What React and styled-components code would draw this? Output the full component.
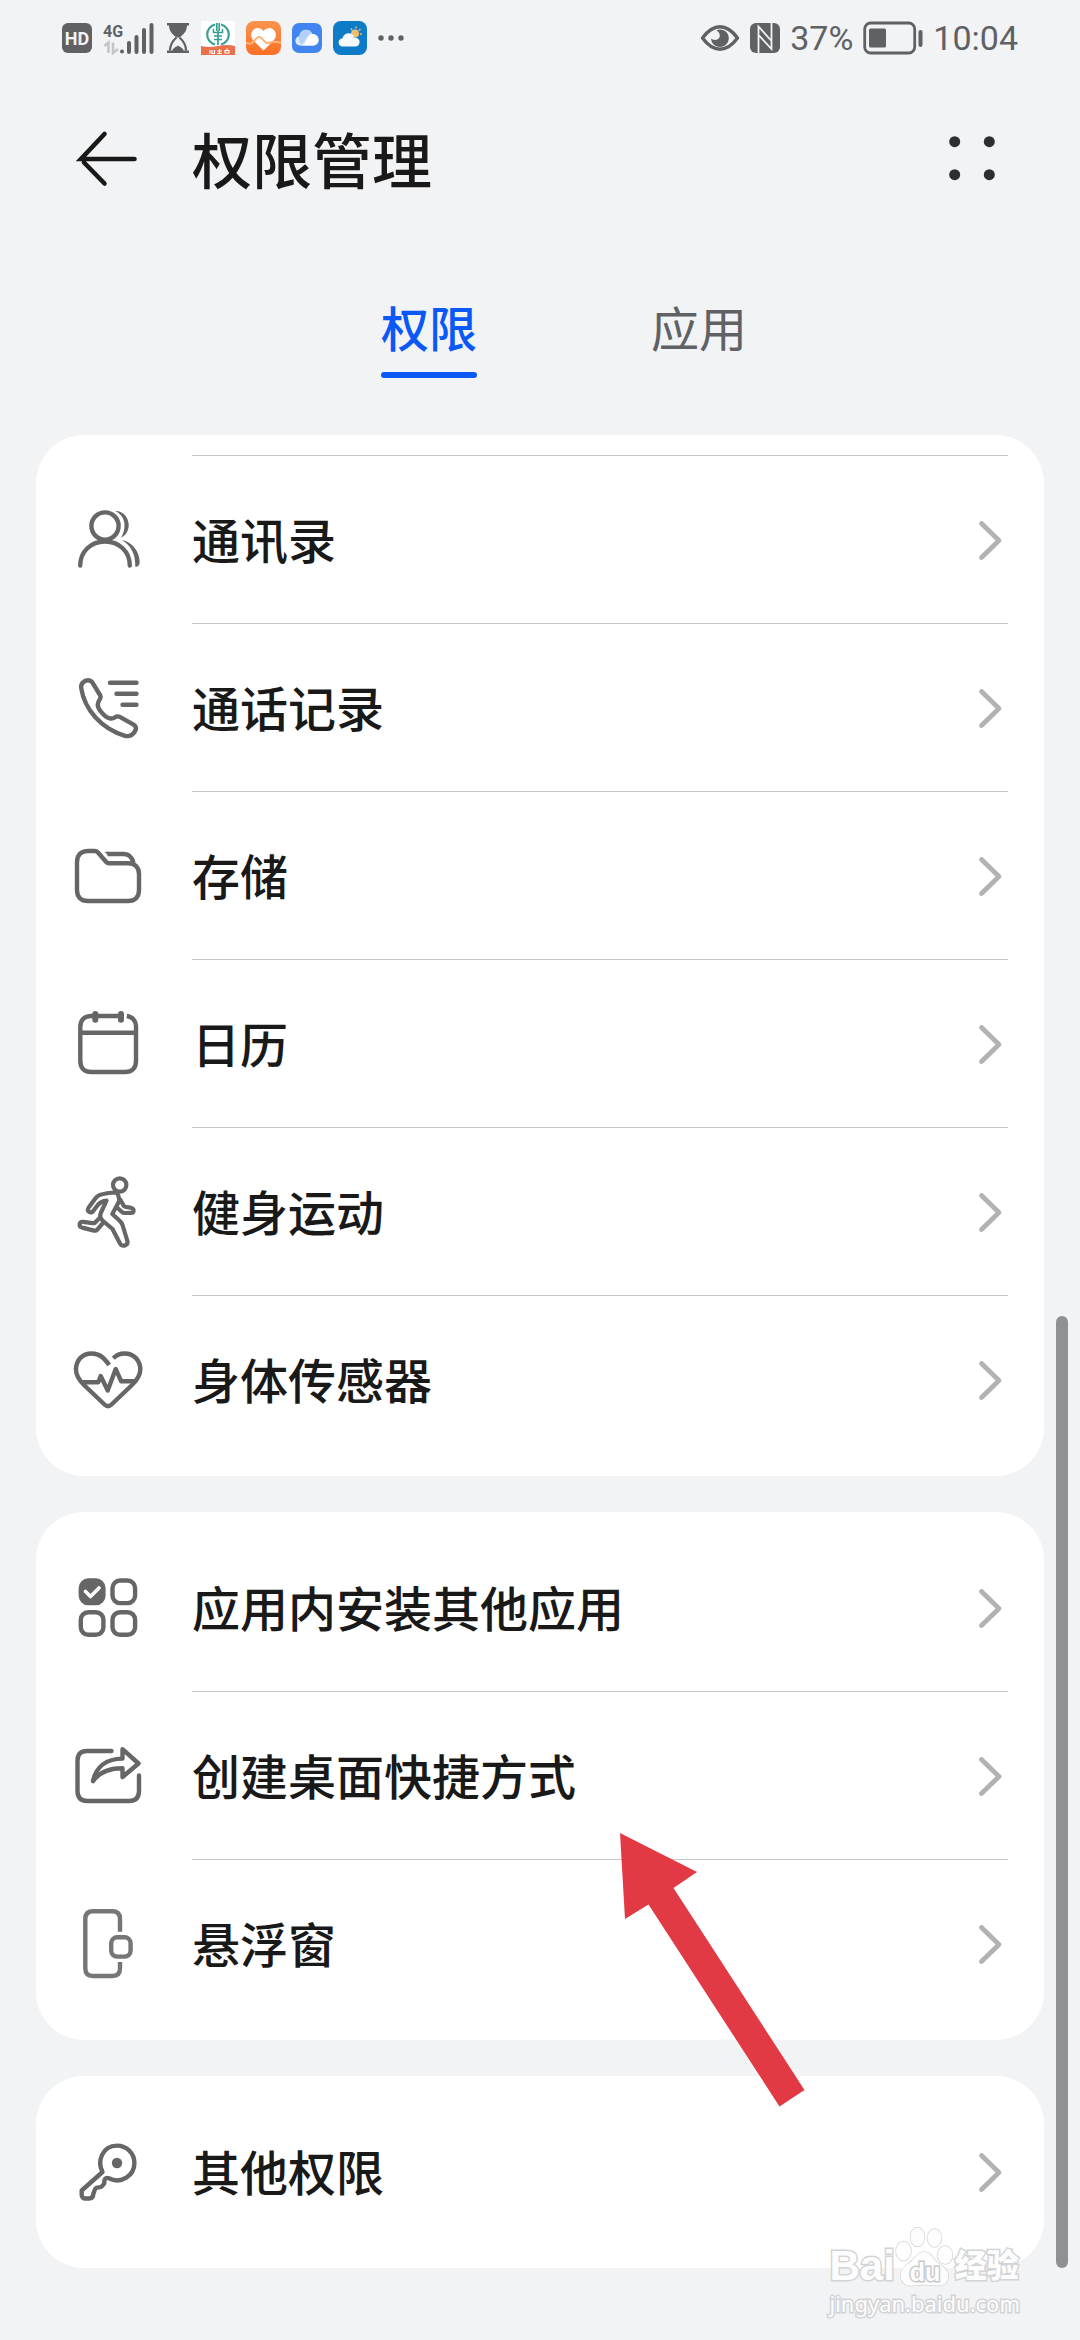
import React from "react";
import styled, { createGlobalStyle } from "styled-components";

const GlobalStyle = createGlobalStyle`
  * {
    box-sizing: border-box;
  }
  body {
    margin: 0;
    background-color: #f1f3f5;
    color: #191919;
    font-family: "Noto Sans CJK SC", sans-serif;
  }
  button {
    margin: 0;
    padding: 0;
    border: none;
    background: none;
    color: inherit;
    font: inherit;
    cursor: pointer;
  }
  svg {
    display: block;
    flex-shrink: 0;
  }
`;

const Page = styled.div`
  position: relative;
  min-height: 100vh;
  padding-bottom: 72px;
`;

const StatusBar = styled.div`
  display: flex;
  justify-content: space-between;
  align-items: center;
  height: 76px;
  padding: 0 62px;
  color: #606164;
`;

const StatusGroup = styled.div`
  display: flex;
  align-items: center;
  gap: ${(props) => props.$gap}px;
`;

const StatusText = styled.span`
  font-family: Roboto, sans-serif;
  font-size: 34px;
  line-height: 40px;
`;

const Header = styled.header`
  display: flex;
  align-items: center;
  height: 168px;
  padding: 0 72px;
`;

const IconButton = styled.button`
  width: 72px;
  height: 72px;
`;

const Title = styled.h1`
  flex: 1;
  margin: 0 0 0 48px;
  padding-bottom: 4px;
  font-size: 60px;
  font-weight: 500;
  line-height: 84px;
`;

const Tabs = styled.div`
  display: flex;
  justify-content: center;
  gap: 174px;
  padding: 44px 0 57px 48px;
`;

const Tab = styled.button`
  position: relative;
  height: 90px;
  padding-bottom: 14px;
  color: #606164;
  font-size: 48px;
  line-height: 72px;

  &[aria-selected="true"] {
    color: #0a59f7;
    font-weight: 500;
  }

  &[aria-selected="true"]::after {
    content: "";
    position: absolute;
    left: 0;
    right: 0;
    bottom: 0;
    height: 6px;
    border-radius: 3px;
    background-color: #0a59f7;
  }
`;

const Cards = styled.main`
  display: flex;
  flex-direction: column;
  gap: 36px;
  padding: 0 36px;
`;

const Card = styled.ul`
  position: relative;
  list-style: none;
  margin: 0;
  padding: ${(props) => (props.$scrolled ? 0 : 12)}px 0 12px;
  border-radius: 48px;
  background-color: #fff;
`;

const RowStub = styled.li`
  height: 21px;
  margin: 0 36px 0 156px;
  border-bottom: 1px solid #c7c7c7;
`;

const Row = styled.button`
  display: flex;
  align-items: center;
  gap: 48px;
  width: 100%;
  height: 168px;
  padding: 0 36px;
  text-align: left;
`;

const RowBody = styled.span`
  display: flex;
  flex: 1;
  align-items: center;
  justify-content: space-between;
  height: 168px;
  border-bottom: 1px solid #c7c7c7;

  li:last-of-type & {
    border-bottom-color: transparent;
  }
`;

const Label = styled.span`
  padding-bottom: 4px;
  font-size: 48px;
  font-weight: 500;
  line-height: 72px;
`;

const ScrollThumb = styled.div`
  position: absolute;
  right: 12px;
  top: 1316px;
  bottom: 72px;
  width: 12px;
  border-radius: 6px;
  background-color: #909193;
`;

const Pointer = styled.svg`
  position: absolute;
  z-index: 1;
  left: 584px;
  top: 321px;
  pointer-events: none;
`;

const Watermark = styled.div`
  position: absolute;
  right: 60px;
  bottom: 22px;
  color: #fdfdfd;
  -webkit-text-stroke: 3px #d3d4d6;
  paint-order: stroke fill;
  pointer-events: none;
`;

const WatermarkLogo = styled.div`
  display: flex;
  align-items: flex-end;
  height: 64px;
  font-family: "Liberation Sans", "Noto Sans CJK SC", sans-serif;
  font-size: 42px;
  font-weight: bold;
  line-height: 44px;
`;

const WatermarkName = styled.span`
  font-size: 32px;
  font-weight: 900;
`;

const WatermarkUrl = styled.div`
  font-family: "Noto Sans", sans-serif;
  font-size: 22px;
  line-height: 30px;
  text-align: right;
`;

const LineIcon = ({ children, color = "#666" }) => (
  <svg
    width="72"
    height="72"
    viewBox="0 0 72 72"
    fill="none"
    stroke={color}
    strokeWidth="4.4"
    strokeLinecap="round"
    strokeLinejoin="round"
    aria-hidden="true"
  >
    {children}
  </svg>
);

const ContactsIcon = () => (
  <LineIcon>
    <circle cx="33" cy="22" r="13.6" />
    <path d="M8.2 61.5C8.2 47.5 19 37.5 33 37.5S57.8 47.5 57.8 61.5" />
    <g fill="#666" stroke="none">
      <path d="M43 7c8-.5 13.7 6.5 13.7 14 0 6-3 10.500-7.500 12.500 2.500-4.500 3.300-8 3.300-12.500C52.500 15 49 9.500 43 7z" />
      <path d="M50 36c10 2 17.500 11 17.700 22 .1 4-3 5.500-4.400 4.500C63.500 50 59 41.500 50 36z" />
    </g>
  </LineIcon>
);

const CallLogIcon = () => (
  <LineIcon>
    <path d="M38 10.700H64.500M44.500 21.700H64.500M50.500 32.700H64.500" />
    <path d="M9.200 16C8.600 11.500 12 8.200 16 8.200c2.500 0 3.600 1 4.600 2.600l7.400 12.200c1 1.700.7 3-.3 4.500-2.700 3.600-2.500 7 0 10.500 2.600 3.600 5.800 7.500 10 8.400 2.200.4 3.800 0 5.500-1.200 1.800-1.200 3.200-1.100 5-.1l13 7.200c2.400 1.400 3.200 2.700 2.600 5.200-1.600 5-6.300 7.600-10.800 6.300C29 56.500 12.500 37.500 9.200 16z" />
  </LineIcon>
);

const FolderIcon = () => (
  <LineIcon>
    <path d="M16 11h7c1.500 0 2 .5 3 1.500l8 9.300c1 1.200 1.800 1.500 3 1.500h19c7 0 11 4 11 10.700v16c0 7-4 11-11 11H16C9 61 5 57 5 50V22c0-7 4-11 11-11z" />
    <path d="M35.500 14H52c5 0 8 3 9.500 9" strokeLinecap="butt" />
    <path d="M32.500 11.800l4.500 4.400V11.800z" fill="#666" stroke="none" />
  </LineIcon>
);

const CalendarIcon = () => (
  <LineIcon>
    <path
      d="M54.800 8c6 .8 9.200 5 9.200 11v34c0 7-4 11-11 11H19.300c-7 0-11-4-11-11V19c0-7 4-11 11-11H49M8.300 24.700H64"
      strokeLinecap="butt"
    />
    <path d="M23.300 6v5.700M49 6v5.700" strokeWidth="6" />
  </LineIcon>
);

const RunIcon = () => (
  <LineIcon>
    <g strokeWidth="4.200">
      <circle cx="47.700" cy="9" r="6.700" />
      <path d="M45 16.500c-6 .2-13 1-17.500 2.600-2 .8-3 1.800-4 3.200L16.700 31.500c-2.500 4 1.800 6.500 4.500 3.500l5-6.500c2.300-2.500 5-3.500 8.300-3.800L29 36.500c-1.600 3.500-.6 6 1.500 8l10 8.500 7.500 14.500c2.500 4 8.300 2 7.400-2.500L50.500 49c-.6-2-1.400-3-2.800-4.200L40.300 38 47 25.500c.8-3-.5-6-2-9z" />
      <path d="M28.200 41.500l-5.400 5.200c-.8.600-1.400.6-2.300.4l-9.200-1.300c-4.300-.4-5 4.700-1.200 5.800l12 3c1.500.3 2.300.1 3.200-1l6-7" />
      <path d="M48.500 24l3 5.500c.6.900 1.300 1.300 2.500 1.500l4.500.7c4.500 1 3.700 5.200.4 5.200l-6.400.1c-1 0-1.700-.3-2.500-1l-5-4.500" />
    </g>
  </LineIcon>
);

const HeartIcon = () => (
  <LineIcon>
    <path
      d="M37.200 21C32 14 28 9.500 19.800 9.500 10 9.500 4 16.500 4 25.500c0 6.500 3.500 11 8 15.500L32.500 60.500c2.500 2.400 4.500 2.400 7 0L60 41c4.800-4.800 8.300-9 8.300-15.500C68.300 16.500 62 9.500 52.500 9.500c-4.200 0-8 1.500-11.200 4.700"
      strokeLinecap="butt"
    />
    <path d="M11 38.200H26.300L28.700 32l7 14.500L43.700 25l5.500 12.300H63" />
  </LineIcon>
);

const InstallIcon = () => (
  <LineIcon>
    <rect x="8.800" y="8.500" width="22.600" height="22.600" rx="7.500" fill="#666" />
    <rect x="40.500" y="8.500" width="22.600" height="22.600" rx="7.500" />
    <rect x="8.800" y="40.200" width="22.600" height="22.600" rx="7.500" />
    <rect x="40.500" y="40.200" width="22.600" height="22.600" rx="7.500" />
    <path d="M13.500 19.500l5 5L27 16" stroke="#fff" strokeWidth="3.600" />
  </LineIcon>
);

const ShortcutIcon = () => (
  <LineIcon>
    <path d="M39.500 11H15c-6.500 0-9.500 3.500-9.500 10v30c0 6.500 3.500 10 10 10H57c6.500 0 10-3.500 10-10V35.500" />
    <path d="M50.500 9.200L66.500 23.500 50.500 37V28.200C37 28.200 27.500 31.500 21 41.200 24 26.500 34.500 18.800 50.500 18.600z" />
  </LineIcon>
);

const FloatingIcon = () => (
  <LineIcon color="#767676">
    <path
      d="M48 23.700V11c0-5-2.700-7.700-7.700-7.700H21c-5 0-7.700 2.700-7.700 7.700V60.300c0 5 2.700 7.700 7.700 7.700H40.300c5 0 7.700-2.700 7.700-7.700V54"
      strokeLinecap="butt"
    />
    <rect x="39.200" y="29.200" width="19.400" height="19.400" rx="6" />
  </LineIcon>
);

const KeyIcon = () => (
  <LineIcon>
    <path d="M30.500 36C25 25.500 30 9.600 45 9.600c10 0 17.400 8 17.400 17.400 0 12.500-13 21.500-25.500 15.300-1.700-.7-3-.4-3.900.6-1.500 1.600.3 3.600-1.200 5.200l-2 2.300c-1.500 1.700-3.500.4-5.300 1.300-2.700 1.300-1.600 3.800-3.200 5.800 0 3.300-1.700 5-4.300 5h-3.700c-2 0-3.600-1.300-3.600-3.500V54.500z" />
    <circle cx="45" cy="27" r="5.200" fill="#666" stroke="none" />
  </LineIcon>
);

const Chevron = () => (
  <svg
    width="36"
    height="72"
    viewBox="0 0 36 72"
    fill="none"
    stroke="#b2b2b2"
    strokeWidth="4.800"
    strokeLinecap="round"
    strokeLinejoin="round"
    aria-hidden="true"
  >
    <path d="M9.500 19.500L27 36.500 9.500 53.500" />
  </svg>
);

const HdBadge = () => (
  <svg width="30" height="30" viewBox="0 0 30 30">
    <rect width="30" height="30" rx="6" fill="#606164" />
    <text
      x="15"
      y="21.500"
      textAnchor="middle"
      fill="#f1f3f5"
      fontFamily="Roboto, sans-serif"
      fontSize="18"
      fontWeight="700"
    >
      HD
    </text>
  </svg>
);

const Signal = () => (
  <svg width="52" height="34" viewBox="0 0 52 34">
    <text
      x="0"
      y="16"
      fill="#606164"
      fontFamily="Roboto, sans-serif"
      fontSize="16"
      fontWeight="700"
    >
      4G
    </text>
    <path
      d="M1.500 25l4-3.500V32M10 21.500V32l5-4"
      fill="none"
      stroke="#c4c5c7"
      strokeWidth="2.500"
    />
    <g stroke="#606164" strokeWidth="4" strokeLinecap="round">
      <path d="M19 30.500v.1M26 22v9M33.500 16v15M41 9v22M48.500 4v27" />
    </g>
  </svg>
);

const Hourglass = () => (
  <svg width="24" height="32" viewBox="0 0 24 32" fill="#606164">
    <path d="M1 1h22v2.500H1zM1 28.500h22V31H1z" />
    <path d="M3 3h18c0 6-3 9-7.500 12.500h-3C6 12 3 9 3 3z" />
    <path
      d="M10.500 15.500C6.500 19 4 22 4 28.500M13.500 15.500c4 3.500 6.500 6.500 6.500 13"
      fill="none"
      stroke="#606164"
      strokeWidth="2.200"
    />
    <path d="M6.500 29c0-3 3-3.500 5.500-5.500 2.500 2 5.500 2.500 5.500 5.500z" />
  </svg>
);

const BankApp = () => (
  <svg width="34" height="34" viewBox="0 0 34 34">
    <rect width="34" height="34" fill="#fff" />
    <g fill="none" stroke="#36a093" strokeWidth="2.200">
      <path d="M14 3.500a10.300 10.300 0 0 0 0 20M20 3.500a10.300 10.300 0 0 1 0 20" />
      <path d="M15.800 2v8M18.200 2v8M17 10v14" strokeWidth="1.700" />
      <path d="M12.500 11.500h9M13 15h8M13 18.500h8M12.500 8v4M21.500 8v4" strokeWidth="1.600" />
    </g>
    <path d="M0 25q8 2 17 0t17 0v9H0z" fill="#ea7049" />
    <path
      d="M9 29v3.500M11 29v3.500h2.500V29M16 30h5M18.500 28v5M16 32.500h5M24 29.500h4v2.500h-4zM26 27.500v2"
      fill="none"
      stroke="#fff"
      strokeWidth="1.200"
    />
  </svg>
);

const HealthApp = () => (
  <svg width="35" height="34" viewBox="0 0 35 34">
    <defs>
      <linearGradient id="health" x1="0" y1="0" x2="0" y2="1">
        <stop offset="0" stopColor="#fb9450" />
        <stop offset="1" stopColor="#fb6f24" />
      </linearGradient>
    </defs>
    <rect width="35" height="34" rx="8" fill="url(#health)" />
    <path
      d="M17.500 29.500L7 19C1 11 11 2.500 17.500 10 24 2.500 34 11 28 19z"
      fill="#fff"
    />
    <path
      d="M0 22c3 0 4 2 6 0l5-5c3-3 5 1 7 3 3 3 5 2 8 1 3-.6 5 .5 9 .5"
      fill="none"
      stroke="#fcb47c"
      strokeWidth="2"
    />
  </svg>
);

const CloudApp = () => (
  <svg width="30" height="30" viewBox="0 0 30 30">
    <rect width="30" height="30" rx="7" fill="#4285f0" />
    <path
      d="M8 22.500c-6-.5-6-8.500-.5-9.500C8 5.500 18 4.500 20.500 11c7 0 8.500 10 1.500 11.500z"
      fill="#dceafe"
    />
    <path d="M8 22.500c5 0 5-3 7-7 1.500-3 3-4.500 5.500-4.500 7 0 8.500 10 1.500 11.500z" fill="#fff" />
    <path d="M7.500 13C8 6 17 5 20 10.500c-5 .5-5 6-10 11-3-2-4-5-2.500-8.500z" fill="#b3d0fb" />
  </svg>
);

const WeatherApp = () => (
  <svg width="34" height="34" viewBox="0 0 34 34">
    <rect width="34" height="34" rx="8" fill="#0e7bc8" />
    <circle cx="22" cy="12.500" r="4" fill="#f4bd6c" />
    <path
      d="M18 7.500l1 1.500M23 5.500v2M27.500 8l-1.500 1.500M29 13h-2"
      stroke="#f4bd6c"
      strokeWidth="1.400"
    />
    <path
      d="M10 25.500c-6 0-5.500-8-.5-8.300C11 11 19.500 10.500 21 16.500c7-1 7.500 9 1 9z"
      fill="#f6f9fd"
    />
  </svg>
);

const MoreDots = () => (
  <svg width="26" height="6" viewBox="0 0 26 6" fill="#606164">
    <circle cx="3" cy="3" r="2.700" />
    <circle cx="13" cy="3" r="2.700" />
    <circle cx="23" cy="3" r="2.700" />
  </svg>
);

const EyeIcon = () => (
  <svg width="40" height="28" viewBox="0 0 40 28">
    <path
      d="M2.500 14C8 6.500 13.500 2.800 20 2.800S32 6.500 37.500 14C32 21.500 26.500 25.200 20 25.200S8 21.500 2.500 14z"
      fill="none"
      stroke="#606164"
      strokeWidth="3.400"
      strokeLinejoin="round"
    />
    <path
      d="M20 5.500c5 0 8.800 3.700 8.800 8.500s-3.800 9-8.800 9-9-4-8.800-8.500c2 2.500 8.300 1.800 8.600-2.600.2-2.900-1.800-4.400-3.300-5.400 1-.7 2.200-1 3.500-1z"
      fill="#606164"
    />
  </svg>
);

const NfcIcon = () => (
  <svg width="30" height="30" viewBox="0 0 30 30">
    <rect width="30" height="30" rx="6" fill="#606164" />
    <path
      d="M8.500 30V3.500L21.500 18M21.500 0v26L9 12.500"
      fill="none"
      stroke="#f1f3f5"
      strokeWidth="1.800"
    />
  </svg>
);

const BatteryIcon = () => (
  <svg width="60" height="34" viewBox="0 0 60 34">
    <rect
      x="1.700"
      y="2"
      width="50"
      height="30"
      rx="6"
      fill="none"
      stroke="#606164"
      strokeWidth="2.800"
    />
    <rect x="6" y="7.500" width="17" height="19" rx="1.500" fill="#606164" />
    <rect x="55.500" y="9" width="4" height="17" rx="2" fill="#606164" />
  </svg>
);

const Paw = () => (
  <svg width="60" height="64" viewBox="0 0 60 64">
    <g fill="#fdfdfd" stroke="#d3d4d6" strokeWidth="1.500">
      <ellipse cx="8.500" cy="27" rx="7.500" ry="9.500" />
      <ellipse cx="22.500" cy="13" rx="7" ry="9.500" />
      <ellipse cx="39.500" cy="14" rx="7" ry="9" />
      <ellipse cx="50" cy="31" rx="7.500" ry="9" />
      <path d="M29 28c8 0 9 8 15 12 6 3.500 10 8 9 14-1 6-5 8-11 7.500-8-1-16-1-24 0-6 1-11-2-12-7.500-1-7 2-11 8-15 6-4 8-11 15-11z" />
    </g>
    <text
      x="30"
      y="57"
      textAnchor="middle"
      fill="#fdfdfd"
      stroke="#c9cacc"
      strokeWidth="3"
      fontFamily="Liberation Sans, sans-serif"
      fontSize="25"
      fontWeight="700"
    >
      du
    </text>
  </svg>
);

const PERMISSIONS = [
  { label: "通讯录", Icon: ContactsIcon },
  { label: "通话记录", Icon: CallLogIcon },
  { label: "存储", Icon: FolderIcon },
  { label: "日历", Icon: CalendarIcon },
  { label: "健身运动", Icon: RunIcon },
  { label: "身体传感器", Icon: HeartIcon },
];

const APP_PERMISSIONS = [
  { label: "应用内安装其他应用", Icon: InstallIcon },
  { label: "创建桌面快捷方式", Icon: ShortcutIcon },
  { label: "悬浮窗", Icon: FloatingIcon },
];

const OTHER = [{ label: "其他权限", Icon: KeyIcon }];

const Rows = ({ items }) =>
  items.map(({ label, Icon }) => (
    <li key={label}>
      <Row type="button">
        <Icon />
        <RowBody>
          <Label>{label}</Label>
          <Chevron />
        </RowBody>
      </Row>
    </li>
  ));

const App = () => {
  const [tab, setTab] = React.useState("权限");

  return (
    <Page>
      <GlobalStyle />
      <StatusBar>
        <StatusGroup $gap={11}>
          <HdBadge />
          <Signal />
          <Hourglass />
          <BankApp />
          <HealthApp />
          <CloudApp />
          <WeatherApp />
          <MoreDots />
        </StatusGroup>
        <StatusGroup $gap={10}>
          <EyeIcon />
          <NfcIcon />
          <StatusText>37%</StatusText>
          <BatteryIcon />
          <StatusText>10:04</StatusText>
        </StatusGroup>
      </StatusBar>

      <Header>
        <IconButton type="button" aria-label="返回">
          <svg
            width="72"
            height="72"
            viewBox="0 0 72 72"
            fill="none"
            stroke="#191919"
            strokeWidth="4.600"
            strokeLinecap="round"
          >
            <path d="M62.500 35H9L32.500 10M32.500 59.500L12 38.500" />
          </svg>
        </IconButton>
        <Title>权限管理</Title>
        <IconButton type="button" aria-label="更多">
          <svg width="72" height="72" viewBox="0 0 72 72" fill="#2d2e2f">
            <circle cx="18.700" cy="17.700" r="5.500" />
            <circle cx="53.300" cy="17.700" r="5.500" />
            <circle cx="18.700" cy="50.700" r="5.500" />
            <circle cx="53.300" cy="50.700" r="5.500" />
          </svg>
        </IconButton>
      </Header>

      <Tabs role="tablist">
        {["权限", "应用"].map((name) => (
          <Tab
            key={name}
            type="button"
            role="tab"
            aria-selected={tab === name}
            onClick={() => setTab(name)}
          >
            {name}
          </Tab>
        ))}
      </Tabs>

      <Cards>
        <Card $scrolled>
          <RowStub aria-hidden="true" />
          <Rows items={PERMISSIONS} />
        </Card>
        <Card>
          <Rows items={APP_PERMISSIONS} />
          <Pointer width="186" height="275" viewBox="0 0 186 275">
            <path
              d="M0 0L77 39 53.500 55 184.500 257 159.500 273.500 28.500 71.500 5 86z"
              fill="#e23a44"
            />
          </Pointer>
        </Card>
        <Card>
          <Rows items={OTHER} />
        </Card>
      </Cards>

      <ScrollThumb />
      <Watermark>
        <WatermarkLogo>
          <span>Bai</span>
          <Paw />
          <WatermarkName>经验</WatermarkName>
        </WatermarkLogo>
        <WatermarkUrl>jingyan.baidu.com</WatermarkUrl>
      </Watermark>
    </Page>
  );
};

export default App;
